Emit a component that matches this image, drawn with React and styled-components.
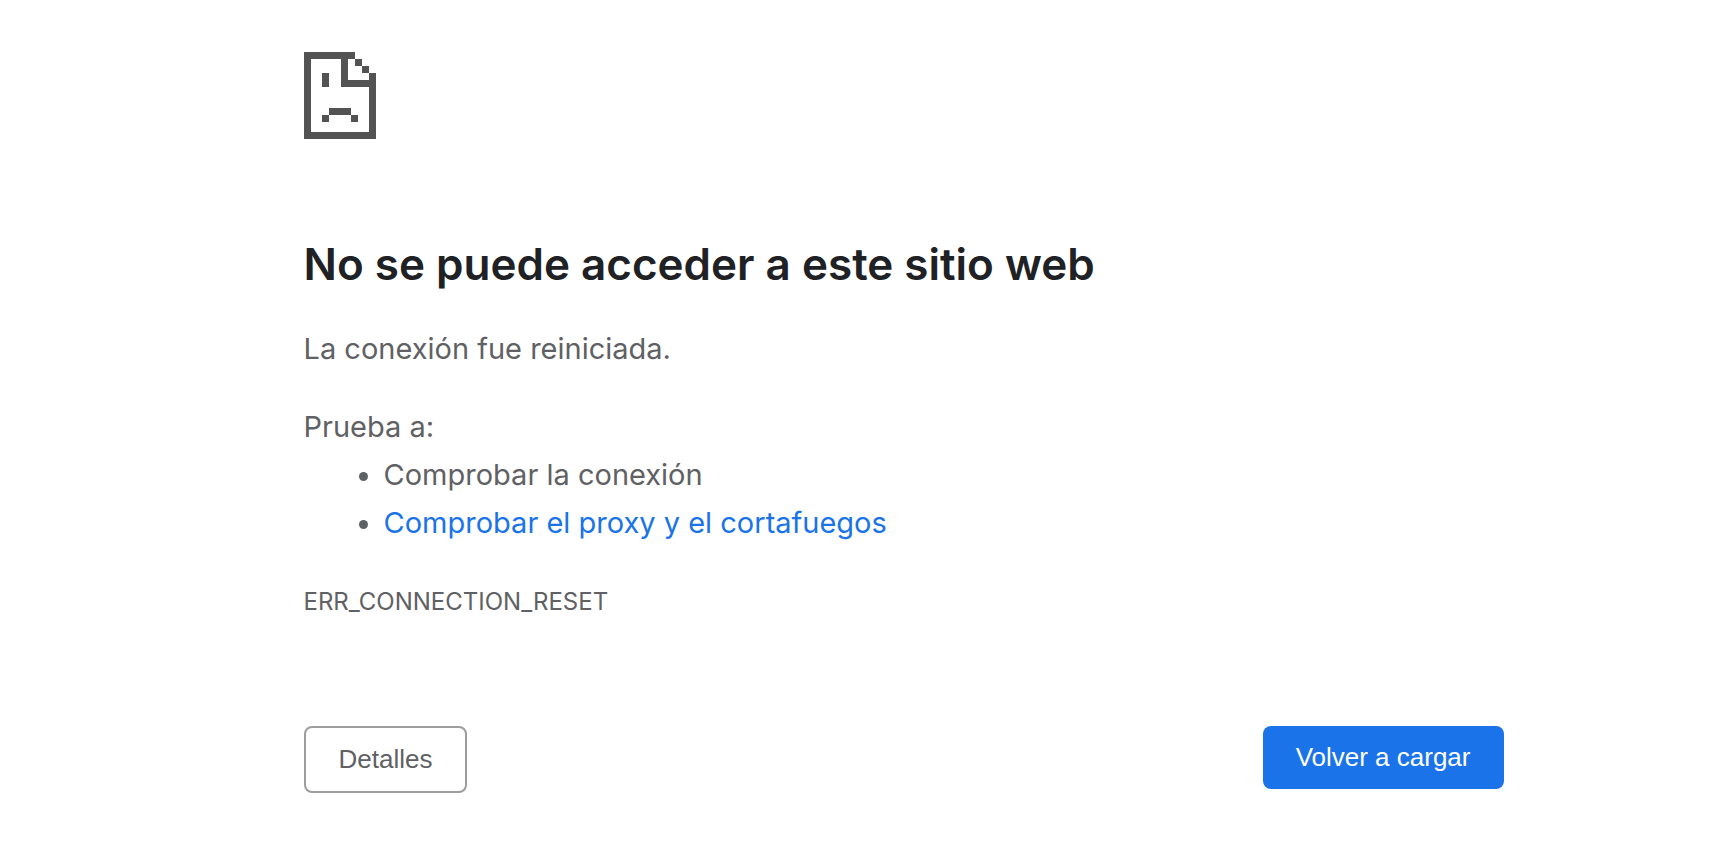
import React from "react";
import styled, { createGlobalStyle } from "styled-components";

const GlobalStyle = createGlobalStyle`
  body {
    margin: 0;
    background: #ffffff;
    color: #5f6164;
    font-family: Inter, "Liberation Sans", sans-serif;
    font-size: 29px;
    line-height: 48px;
  }
`;

const Page = styled.div`
  box-sizing: border-box;
  padding: 52px 0 64px 78px;
`;

const Content = styled.main`
  width: 100%;
  max-width: 1200px;
  margin: 0 auto;
`;

const PageIcon = styled.svg`
  display: block;
  width: 72px;
  height: 87px;
  fill: #535353;
`;

const Title = styled.h1`
  margin: 96px 0 32px;
  color: #202124;
  font-size: 44px;
  font-weight: 600;
  line-height: 58px;
`;

const Paragraph = styled.p`
  margin: 0 0 30px;
`;

const Suggestions = styled.section`
  margin-bottom: 36px;
`;

const SuggestionIntro = styled.p`
  margin: 0;
`;

const SuggestionList = styled.ul`
  margin: 0;
  padding-left: 80px;
`;

const HelpLink = styled.a`
  color: #1a73e8;
  text-decoration: none;
`;

const ErrorCode = styled.div`
  font-size: 24px;
  line-height: 38px;
`;

const Actions = styled.div`
  display: flex;
  flex-wrap: wrap;
  align-items: flex-start;
  justify-content: space-between;
  gap: 24px;
  margin-top: 105px;
`;

const Button = styled.button`
  padding: 16px 33px;
  border: ${(p) => (p.$primary ? "0" : "2px solid #9b9d9f")};
  border-radius: 8px;
  background: ${(p) => (p.$primary ? "#1a73e8" : "#ffffff")};
  color: ${(p) => (p.$primary ? "#ffffff" : "#5f6164")};
  font-family: "Liberation Sans", Arial, sans-serif;
  font-size: 26px;
  line-height: 31px;
  cursor: pointer;
`;

function SadPageIcon() {
  return (
    <PageIcon viewBox="0 0 72 87" shapeRendering="crispEdges" aria-hidden="true">
      <path d="M0 0H51V7H7V80H65V21H72V87H0Z" />
      <path d="M51 7h7v7h-7zM58 14h7v7h-7z" />
      <path d="M37 7h7v21h21v7H37z" />
      <path d="M18 21h7v14h-7z" />
      <path d="M25 56h22v7H25zM18 63h7v7h-7zM47 63h7v7h-7z" />
    </PageIcon>
  );
}

export default function App() {
  return (
    <>
      <GlobalStyle />
      <Page lang="es">
        <Content>
          <SadPageIcon />
          <Title>No se puede acceder a este sitio web</Title>
          <Paragraph>La conexión fue reiniciada.</Paragraph>
          <Suggestions>
            <SuggestionIntro>Prueba a:</SuggestionIntro>
            <SuggestionList>
              <li>Comprobar la conexión</li>
              <li>
                <HelpLink href="#proxy">Comprobar el proxy y el cortafuegos</HelpLink>
              </li>
            </SuggestionList>
          </Suggestions>
          <ErrorCode>ERR_CONNECTION_RESET</ErrorCode>
          <Actions>
            <Button type="button">Detalles</Button>
            <Button type="button" $primary>
              Volver a cargar
            </Button>
          </Actions>
        </Content>
      </Page>
    </>
  );
}
